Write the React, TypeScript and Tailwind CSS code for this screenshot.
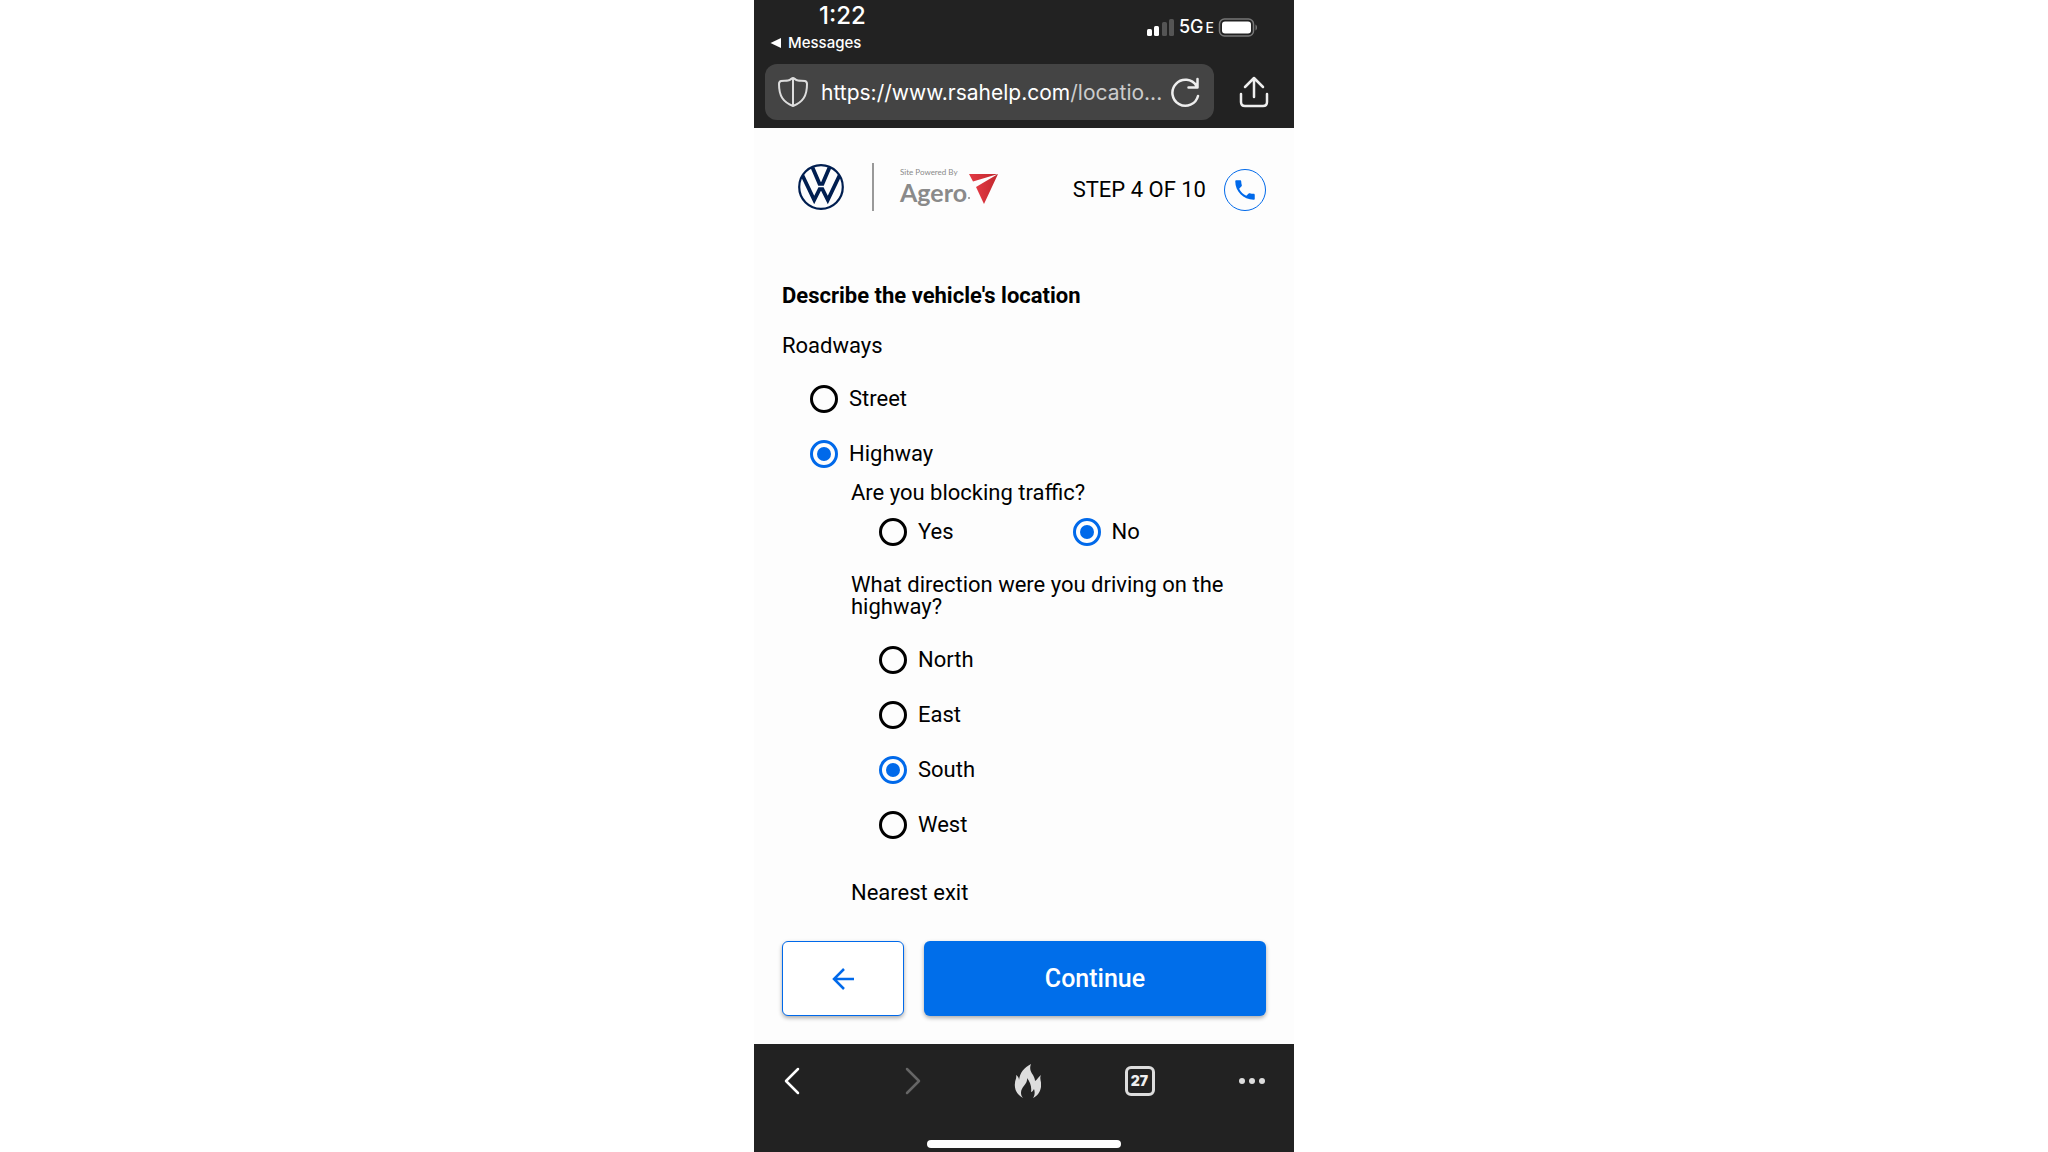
import { useState } from 'react';

type RadioOptionProps = {
  name: string;
  label: string;
  value: string;
  onChange: (label: string) => void;
};

function RadioOption({ name, label, value, onChange }: RadioOptionProps) {
  return (
    <label className="flex items-center gap-[11px] h-7 cursor-pointer">
      <input
        type="radio"
        name={name}
        checked={value === label}
        onChange={() => onChange(label)}
        className="appearance-none w-7 h-7 shrink-0 rounded-full border-3 border-black p-1 bg-clip-content checked:border-[#0069ea] checked:bg-[#0069ea]"
      />
      {label}
    </label>
  );
}

function StatusBar() {
  return (
    <div className="flex items-start justify-between h-16 pl-4 pr-9">
      <div className="pt-1">
        <div className="pl-[49px] text-2xl leading-6 font-medium">1:22</div>
        <a href="#messages" className="flex items-center gap-1.5 mt-1 text-[15px] leading-[22px] font-medium">
          <svg className="w-3 h-3" viewBox="0 0 12 12" fill="currentColor">
            <path d="M0.500 6 11 1v10z" />
          </svg>
          Messages
        </a>
      </div>
      <div className="flex items-center gap-1 pt-[17px]">
        <svg className="w-7 h-5" viewBox="0 0 28 20" fill="#fff">
          <rect x="0" y="11" width="5" height="7" rx="1.500" />
          <rect x="7" y="8" width="5" height="10" rx="1.500" />
          <rect x="15" y="4" width="5" height="14" rx="1.500" fill="#555" />
          <rect x="22" y="1" width="5" height="17" rx="1.500" fill="#555" />
        </svg>
        <span className="flex items-baseline gap-0.5 text-lg leading-5 font-medium">
          5G<span className="text-sm leading-5">E</span>
        </span>
        <svg className="w-10 h-5" viewBox="0 0 40 20">
          <rect x="1.500" y="1" width="34" height="17" rx="5" fill="none" stroke="#777" strokeWidth="1.500" />
          <rect x="4" y="3.500" width="29" height="12" rx="3" fill="#fff" />
          <path d="M37.500 6.500c2 1 2 5 0 6z" fill="#777" />
        </svg>
      </div>
    </div>
  );
}

function AddressBar() {
  return (
    <div className="flex items-center gap-6 h-14 pl-[11px] pr-6">
      <div className="flex grow items-center h-14 min-w-0 rounded-xl bg-[#444] px-3">
        <svg className="w-8 h-8 shrink-0" viewBox="0 0 32 32" fill="none" stroke="#ddd" strokeWidth="2" strokeLinejoin="round">
          <path d="M16 2c-1.500 0-2 2-5 2.500-2.500.4-5-.1-7 .5-1.500.5-2 1.500-2 3C2 20 6 26 16 30c10-4 14-10 14-22 0-1.500-.5-2.500-2-3-2-.6-4.500-.1-7-.5-3-.5-3.500-2.500-5-2.500zM16 2v28" />
        </svg>
        <div className="grow pl-3 pt-0.5 text-[21px] leading-7 whitespace-nowrap">
          https://www.rsahelp.com<span className="text-[#ccc]">/locatio...</span>
        </div>
        <button type="button" aria-label="Reload">
          <svg className="w-8 h-8" viewBox="0 0 32 32" fill="none" stroke="#eee" strokeWidth="2.500" strokeLinecap="round" strokeLinejoin="round">
            <path d="M28 20A13 13 0 1 1 26.500 10M27.500 3v8.500h-9" />
          </svg>
        </button>
      </div>
      <button type="button" aria-label="Share">
        <svg className="w-8 h-8" viewBox="0 0 32 32" fill="none" stroke="#eee" strokeWidth="2.500" strokeLinecap="round" strokeLinejoin="round">
          <path d="M16 21V2M7 11l9-9 9 9M3 18v8q0 4 4 4h18q4 0 4-4v-8" />
        </svg>
      </button>
    </div>
  );
}

function VwLogo() {
  return (
    <svg className="w-[46px] h-[46px]" viewBox="0 0 46 46" fill="none" stroke="#001e50">
      <circle cx="23" cy="23" r="21.800" strokeWidth="2.200" />
      <path d="M14.500 3.500 21.500 19.800h3L31.500 3.500" strokeWidth="3.800" />
      <path d="M4.500 11.500 16.200 36 21.600 25.200h2.800L29.800 36 41.500 11.500" strokeWidth="3.800" />
    </svg>
  );
}

function AgeroLogo() {
  return (
    <div className="flex items-start gap-px text-[#8a8a8a]">
      <div className="pt-0.5">
        <div className="font-[Lato] text-[8px] leading-2">Site Powered By</div>
        <div className="font-[Lato] text-[25px] leading-8 font-bold">Agero</div>
      </div>
      <svg className="w-8 h-8 mt-1.5" viewBox="0 0 32 32">
        <defs>
          <linearGradient id="agero-red" x1="0" y1="0" x2="1" y2="0">
            <stop offset="0" stopColor="#e23a44" />
            <stop offset="1" stopColor="#c1272d" />
          </linearGradient>
        </defs>
        <path d="M1 2h29L5 9.500z" fill="url(#agero-red)" />
        <path d="M30 2 16 32 8 15z" fill="url(#agero-red)" />
        <circle cx="1" cy="26" r="1" fill="#8a8a8a" />
      </svg>
    </div>
  );
}

function BrowserToolbar() {
  return (
    <footer className="flex flex-col items-center justify-between h-[108px] bg-[#222] pt-[19px] pb-1 font-[Inter]">
      <div className="flex w-full items-center justify-between px-6">
        <button type="button" aria-label="Back">
          <svg className="w-8 h-9" viewBox="0 0 32 36" fill="none" stroke="#fff" strokeWidth="2.500" strokeLinecap="round" strokeLinejoin="round">
            <path d="M20 6 8 18l12 12" />
          </svg>
        </button>
        <button type="button" aria-label="Forward">
          <svg className="w-8 h-9" viewBox="0 0 32 36" fill="none" stroke="#666" strokeWidth="2.500" strokeLinecap="round" strokeLinejoin="round">
            <path d="M13 6l12 12L13 30" />
          </svg>
        </button>
        <button type="button" aria-label="Clear data">
          <svg className="w-8 h-9" viewBox="-5 0 32 36" fill="#ddd">
            <path d="M17 1c-2 5 0 8 2 11 1 2 2 4 2 6 2-1 3-4 6-6-2 4 1 7 0 12-1 6-4 9-8 11 2-3 2-6 1-9-1 2-2 3-3 3 1-5-1-10-4-14 1 6-6 8-6 15 0 2 1 4 2 5C3 32 0 26 1 20c0-3 2-5 1-8 2 1 3 3 3 5C6 9 10 5 17 1z" />
          </svg>
        </button>
        <button type="button" aria-label="Tabs" className="w-[30px] h-[30px] rounded-md border-3 border-[#ddd] text-sm leading-6 font-black text-[#eee]">
          27
        </button>
        <button type="button" aria-label="Menu">
          <svg className="w-8 h-9" viewBox="0 0 32 36" fill="#ddd">
            <circle cx="4" cy="18" r="3" />
            <circle cx="14" cy="18" r="3" />
            <circle cx="24" cy="18" r="3" />
          </svg>
        </button>
      </div>
      <div className="w-[194px] h-2 rounded-full bg-white" />
    </footer>
  );
}

const directions = ['North', 'East', 'South', 'West'];

export default function App() {
  const [roadway, setRoadway] = useState('Highway');
  const [blocking, setBlocking] = useState('No');
  const [direction, setDirection] = useState('South');

  return (
    <div className="min-h-screen bg-white">
      <div className="flex flex-col w-full max-w-[540px] min-h-screen mx-auto bg-[#fdfdfd] font-[Roboto] text-[22px] leading-[22px] text-black">
        <header className="h-32 bg-[#222] text-white font-[Inter]">
          <StatusBar />
          <AddressBar />
        </header>

        <main className="flex flex-col grow px-7">
          <div className="flex items-end justify-between pt-[35px] pl-4">
            <div className="flex items-center">
              <VwLogo />
              <div className="w-0.5 h-12 ml-7 mr-[26px] bg-[#999]" />
              <AgeroLogo />
            </div>
            <div className="flex items-center gap-[18px]">
              <span>STEP 4 OF 10</span>
              <a href="tel:" aria-label="Call" className="flex items-center justify-center w-[42px] h-[42px] rounded-full border border-[#0069ea]">
                <svg className="w-[26px] h-[26px]" viewBox="0 0 24 24" fill="#0069ea">
                  <path d="M6.620 10.790c1.440 2.830 3.760 5.140 6.590 6.590l2.200-2.200c.27-.27.67-.36 1.020-.24 1.120.37 2.330.57 3.570.57.55 0 1 .45 1 1V20c0 .55-.45 1-1 1-9.390 0-17-7.610-17-17 0-.55.45-1 1-1h3.500c.55 0 1 .45 1 1 0 1.250.2 2.450.57 3.570.11.35.03.74-.25 1.020l-2.200 2.200z" />
                </svg>
              </a>
            </div>
          </div>

          <h1 className="mt-[74px] font-bold">Describe the vehicle's location</h1>
          <fieldset className="mt-7">
            <legend>Roadways</legend>
            <div className="flex flex-col gap-[27px] pl-7 mt-7">
              <RadioOption name="roadway" label="Street" value={roadway} onChange={setRoadway} />
              <RadioOption name="roadway" label="Highway" value={roadway} onChange={setRoadway} />
            </div>
          </fieldset>

          <div className="pl-[69px]">
            <fieldset className="mt-3.5">
              <legend>Are you blocking traffic?</legend>
              <div className="grid grid-cols-2 pl-7 mt-3.5">
                <RadioOption name="blocking" label="Yes" value={blocking} onChange={setBlocking} />
                <RadioOption name="blocking" label="No" value={blocking} onChange={setBlocking} />
              </div>
            </fieldset>
            <fieldset className="mt-7">
              <legend>What direction were you driving on the highway?</legend>
              <div className="flex flex-col gap-[27px] pl-7 mt-7">
                {directions.map((d) => (
                  <RadioOption key={d} name="direction" label={d} value={direction} onChange={setDirection} />
                ))}
              </div>
            </fieldset>
            <p className="mt-[43px]">Nearest exit</p>
          </div>

          <div className="flex gap-5 mt-auto pt-7 mb-7">
            <button type="button" aria-label="Previous step" className="flex items-center justify-center w-[122px] h-[75px] rounded-md border border-[#0069ea] bg-white shadow-[0_2px_4px_#0005]">
              <svg className="w-6 h-6" viewBox="0 0 24 24" fill="none" stroke="#0069ea" strokeWidth="2.500">
                <path d="M23 12H3M13 2 3 12l10 10" />
              </svg>
            </button>
            <button type="button" className="grow h-[75px] rounded-md bg-[#006eea] text-[25px] font-medium text-white shadow-[0_2px_4px_#0005]">
              Continue
            </button>
          </div>
        </main>

        <BrowserToolbar />
      </div>
    </div>
  );
}
